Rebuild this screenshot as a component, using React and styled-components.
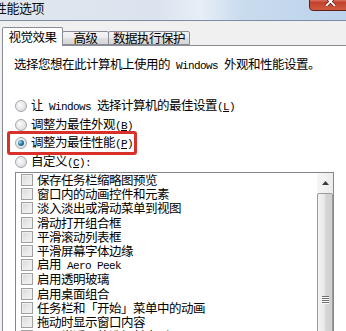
import React from 'react';
import styled, { createGlobalStyle } from 'styled-components';

const Global = createGlobalStyle`
  html, body { margin: 0; padding: 0; background: #f0f0f0; overflow: hidden; }
  body {
    font-family: "Noto Sans CJK SC", "Noto Sans", sans-serif;
    font-size: 12.5px;
    letter-spacing: -0.5px;
    color: #000;
  }
`;

const Window = styled.div`
  width: 346px;
  height: 331px;
  display: flex;
  flex-direction: column;
  overflow: hidden;
`;

const TitleBar = styled.div`
  flex: none;
  height: 20px;
  display: flex;
  align-items: flex-start;
  background: linear-gradient(90deg, #dfe6ee 0%, #dbe4ee 45%, #e6eef6 58%, #c9dbee 70%, #bcd3ec 100%);
  border-bottom: 1px solid #7a8ca2;
`;

const Title = styled.div`
  margin-left: -6px;
  font-size: 13px;
  letter-spacing: -0.5px;
  line-height: 15px;
  color: #111;
`;

const CloseBtn = styled.div`
  margin-left: auto;
  margin-top: -8px;
  margin-right: -6px;
  width: 43px;
  height: 19px;
  box-sizing: border-box;
  border: 1px solid #5e1f17;
  border-radius: 0 0 0 4px;
  background: linear-gradient(180deg, #e7a493 0%, #d87a68 40%, #c5412d 55%, #cf5b40 100%);
  display: flex;
  align-items: flex-end;
  justify-content: center;
  padding-bottom: 4px;
`;

const Body = styled.div`
  flex: 1;
  display: flex;
  flex-direction: column;
  padding: 6px 0 0 2px;
  min-height: 0;
`;

const TabStrip = styled.div`
  display: flex;
  align-items: flex-end;
  height: 18px;
  position: relative;
  z-index: 1;
`;

const Tab = styled.div`
  box-sizing: border-box;
  height: ${p => (p.$active ? '19px' : '14px')};
  margin-bottom: ${p => (p.$active ? '-1px' : '0')};
  width: ${p => p.$w}px;
  margin-left: ${p => (p.$active ? '0' : '-1px')};
  border: 1px solid #898c95;
  border-bottom: ${p => (p.$active ? 'none' : '1px solid #898c95')};
  border-radius: 2px 2px 0 0;
  background: ${p => (p.$active ? '#ffffff' : 'linear-gradient(180deg, #f4f4f4 0%, #ececec 50%, #dedede 55%, #d6d6d6 100%)')};
  display: flex;
  justify-content: center;
  align-items: ${p => (p.$active ? 'flex-start' : 'center')};
  padding-top: ${p => (p.$active ? '3px' : '0')};
  line-height: 12px;
`;

const Panel = styled.div`
  flex: 1;
  background: #ffffff;
  border-top: 1px solid #898c95;
  border-left: 1px solid #898c95;
  padding: 11px 0 0 11px;
  display: flex;
  flex-direction: column;
  min-height: 0;
`;

const Intro = styled.div`
  line-height: 14px;
  white-space: nowrap;
`;

const Lat = styled.span`
  font-family: "Liberation Mono", monospace;
  font-size: 11px;
  letter-spacing: -0.6px;
  white-space: pre;
`;

const Acc = styled.span`
  text-decoration: underline;
  text-underline-offset: 1px;
`;

const RadioGroup = styled.div`
  margin-top: 24px;
  display: flex;
  flex-direction: column;
`;

const RadioRow = styled.div`
  position: relative;
  height: 18.5px;
  display: flex;
  align-items: center;
  gap: 4px;
  padding-left: 1px;
  white-space: nowrap;
  line-height: 14px;
  ${p => p.$highlight && `
    &::after {
      content: '';
      position: absolute;
      left: -7px;
      top: -3px;
      width: 130px;
      height: 24px;
      box-sizing: border-box;
      border: 3px solid #d9302a;
      border-radius: 3px;
    }
  `}
`;

const RadioCircle = styled.span`
  flex: none;
  width: 12px;
  height: 12px;
  box-sizing: border-box;
  border-radius: 50%;
  border: 1px solid #a3a8ae;
  background: radial-gradient(circle at 40% 40%, #fbfbfb 0%, #e6e6e6 55%, #cfcfcf 100%);
  display: flex;
  align-items: center;
  justify-content: center;
  &::before {
    content: '';
    display: ${p => (p.$checked ? 'block' : 'none')};
    width: 6px;
    height: 6px;
    border-radius: 50%;
    background: radial-gradient(circle at 35% 35%, #a6e2f5 0%, #2b7ea6 45%, #0e3f5c 100%);
  }
`;

const ListBox = styled.div`
  margin-top: 1px;
  margin-left: 1px;
  width: 319px;
  height: 200px;
  flex: none;
  box-sizing: border-box;
  border: 1px solid #828790;
  display: flex;
  background: #fff;
  overflow: hidden;
`;

const Items = styled.div`
  flex: 1;
  padding: 0 0 0 5px;
  display: flex;
  flex-direction: column;
`;

const CheckRow = styled.div`
  height: 14.2px;
  flex: none;
  display: flex;
  align-items: center;
  gap: 4px;
  white-space: nowrap;
  line-height: 14px;
`;

const CheckBox = styled.span`
  flex: none;
  width: 12px;
  height: 12px;
  box-sizing: border-box;
  border: 1px solid #a0a0a0;
  background: linear-gradient(135deg, #d6d6d6 0%, #e8e8e8 50%, #f6f6f6 100%);
  box-shadow: inset 0 0 0 1px #efefef;
`;

const ScrollBar = styled.div`
  flex: none;
  width: 16px;
  display: flex;
  flex-direction: column;
  background: #f3f3f3;
`;

const ArrowBtn = styled.div`
  height: 20px;
  flex: none;
  display: flex;
  align-items: center;
  justify-content: center;
  background: linear-gradient(90deg, #f6f6f6, #ececec);
`;

const Thumb = styled.div`
  height: 212px;
  flex: none;
  box-sizing: border-box;
  border: 1px solid #9b9b9b;
  border-radius: 2px;
  background: linear-gradient(90deg, #f4f4f4 0%, #e9e9e9 45%, #d6d6d6 55%, #cfcfcf 100%);
  display: flex;
  align-items: center;
  justify-content: center;
`;

const Grip = styled.div`
  width: 7px;
  display: flex;
  flex-direction: column;
  gap: 1px;
  & > span {
    display: block;
    height: 1px;
    background: #6f6f6f;
    box-shadow: 0 1px 0 #fafafa;
  }
`;

const checks = [
  '保存任务栏缩略图预览',
  '窗口内的动画控件和元素',
  '淡入淡出或滑动菜单到视图',
  '滑动打开组合框',
  '平滑滚动列表框',
  '平滑屏幕字体边缘',
  null,
  '启用透明玻璃',
  '启用桌面组合',
  '任务栏和「开始」菜单中的动画',
  '拖动时显示窗口内容',
  '显示半透明的选择长方形',
];

export default function App() {
  return (
    <Window>
      <Global />
      <TitleBar>
        <Title>性能选项</Title>
        <CloseBtn>
          <svg width="11" height="9" viewBox="0 0 11 9">
            <path d="M1 0 L10 9 M10 0 L1 9" stroke="#5a1a12" strokeWidth="3.2" />
            <path d="M1 0 L10 9 M10 0 L1 9" stroke="#ffffff" strokeWidth="1.8" />
          </svg>
        </CloseBtn>
      </TitleBar>
      <Body>
        <TabStrip>
          <Tab $active $w={61}>视觉效果</Tab>
          <Tab $w={47}>高级</Tab>
          <Tab $w={82}>数据执行保护</Tab>
        </TabStrip>
        <Panel>
          <Intro>
            选择您想在此计算机上使用的<Lat> Windows </Lat>外观和性能设置。
          </Intro>
          <RadioGroup>
            <RadioRow>
              <RadioCircle />
              <span>
                让<Lat> Windows </Lat>选择计算机的最佳设置<Lat>(<Acc>L</Acc>)</Lat>
              </span>
            </RadioRow>
            <RadioRow>
              <RadioCircle />
              <span>
                调整为最佳外观<Lat>(<Acc>B</Acc>)</Lat>
              </span>
            </RadioRow>
            <RadioRow $highlight>
              <RadioCircle $checked />
              <span>
                调整为最佳性能<Lat>(<Acc>P</Acc>)</Lat>
              </span>
            </RadioRow>
            <RadioRow>
              <RadioCircle />
              <span>
                自定义<Lat>(<Acc>C</Acc>):</Lat>
              </span>
            </RadioRow>
          </RadioGroup>
          <ListBox>
            <Items>
              {checks.map((c, i) => (
                <CheckRow key={i}>
                  <CheckBox />
                  {c === null ? (
                    <span>
                      启用<Lat> Aero Peek</Lat>
                    </span>
                  ) : (
                    <span>{c}</span>
                  )}
                </CheckRow>
              ))}
            </Items>
            <ScrollBar>
              <ArrowBtn>
                <svg width="7" height="4" viewBox="0 0 7 4">
                  <path d="M0 4 L3.5 0 L7 4 Z" fill="#3a3a3a" />
                </svg>
              </ArrowBtn>
              <Thumb>
                <Grip>
                  <span />
                  <span />
                  <span />
                  <span />
                </Grip>
              </Thumb>
            </ScrollBar>
          </ListBox>
        </Panel>
      </Body>
    </Window>
  );
}
